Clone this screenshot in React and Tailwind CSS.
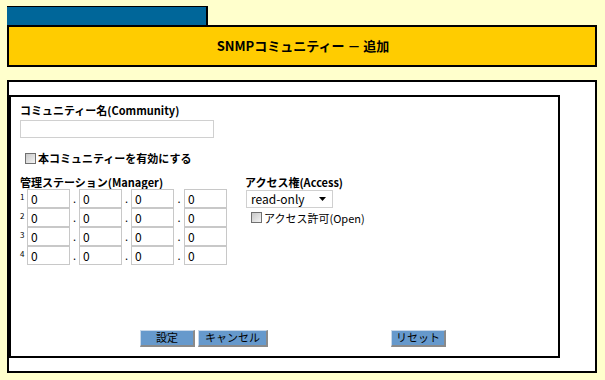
import React from "react";

const font = { fontFamily: '"Noto Sans CJK JP", "Liberation Sans", sans-serif' };

function IpInput() {
  return (
    <input
      defaultValue="0"
      className="w-[43px] h-[19px] border border-[#c8c8c8] bg-white px-[3px] text-[12px] text-black outline-none"
    />
  );
}

function Checkbox() {
  return (
    <span className="inline-block w-[11px] h-[11px] border border-[#707070] bg-gradient-to-br from-[#c8c8c8] to-[#f4f4f4]" />
  );
}

function Btn({ children, w }) {
  return (
    <button
      className={`h-[17px] ${w} bg-[#6699cc] text-[11px] text-black leading-none border-r-2 border-b-2 border-[#8a8a8a] border-t border-l border-t-[#c8d8ea] border-l-[#c8d8ea]`}
    >
      {children}
    </button>
  );
}

export default function App() {
  const rows = [1, 2, 3, 4];
  return (
    <div className="w-[605px] h-[380px] bg-[#ffffcc] pt-[6px] px-[7px] text-black" style={font}>
      <div className="w-[201px] h-[19px] bg-[#006699] border-t border-r-2 border-black" />
      <div className="w-[590px] h-[42px] border-2 border-black bg-[#ffcc00] flex items-center justify-center">
        <span className="text-[13px] font-bold pl-[2px]">SNMPコミュニティー － 追加</span>
      </div>

      <div className="mt-[13px] w-[590px] h-[293px] border-2 border-black bg-white pt-[13px]">
        <div className="w-[551px] h-[263px] border-2 border-black pl-[9px] pt-[6px] flex flex-col">
          <div className="text-[11px] font-bold leading-[14px]">コミュニティー名(Community)</div>
          <input className="mt-[3px] w-[194px] h-[18px] border border-[#d0d0d0] bg-white outline-none" />

          <div className="mt-[12px] ml-[5px] flex items-center gap-[2px] text-[11px] font-bold">
            <Checkbox />
            <span>本コミュニティーを有効にする</span>
          </div>

          <div className="mt-[8px] flex">
            <div className="w-[225px]">
              <div className="text-[11px] font-bold leading-[14px]">管理ステーション(Manager)</div>
              <div className="flex flex-col mt-[0px]">
                {rows.map((n) => (
                  <div key={n} className="flex items-center">
                    <span className="w-[7px] text-[8px] leading-none self-start mt-[4px]">{n}</span>
                    <IpInput />
                    <span className="w-[9px] text-center text-[11px]">.</span>
                    <IpInput />
                    <span className="w-[9px] text-center text-[11px]">.</span>
                    <IpInput />
                    <span className="w-[10px] text-center text-[11px]">.</span>
                    <IpInput />
                  </div>
                ))}
              </div>
            </div>
            <div>
              <div className="text-[11px] font-bold leading-[14px]">アクセス権(Access)</div>
              <div className="mt-[1px] ml-[1px] w-[87px] h-[18px] border border-[#d0d0d0] flex items-center px-[4px] text-[12px]">
                <span>read-only</span>
                <svg className="ml-[14px]" width="7" height="4" viewBox="0 0 7 4"><path d="M0 0 H7 L3.5 4 Z" fill="#000" /></svg>
              </div>
              <div className="mt-[2px] ml-[6px] flex items-center gap-[2px] text-[11px]">
                <Checkbox />
                <span>アクセス許可(Open)</span>
              </div>
            </div>
          </div>

          <div className="mt-auto mb-[9px] flex items-center">
            <div className="ml-[120px]">
              <Btn w="w-[55px]">設定</Btn>
            </div>
            <div className="ml-[3px]">
              <Btn w="w-[70px]">キャンセル</Btn>
            </div>
            <div className="ml-[123px]">
              <Btn w="w-[55px]">リセット</Btn>
            </div>
          </div>
        </div>
      </div>
    </div>
  );
}
